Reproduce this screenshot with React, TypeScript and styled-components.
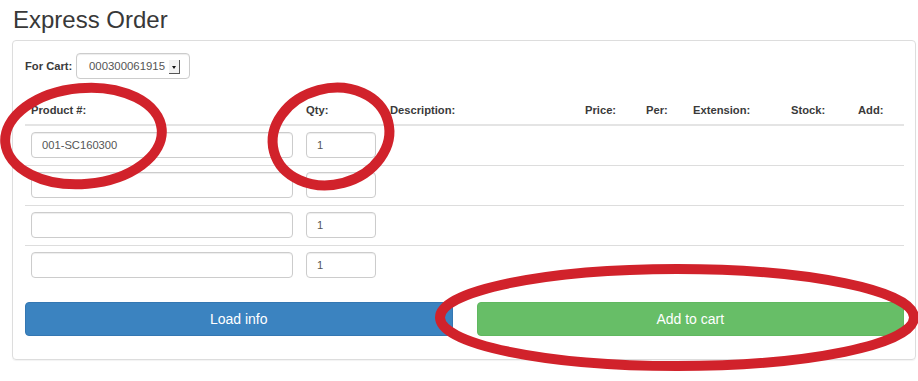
import styled, { createGlobalStyle } from 'styled-components';

const COLUMNS = '275px 84px 195px 61px 47px 98px 67px 52px';

const GlobalStyle = createGlobalStyle`
  html, body {
    margin: 0;
    padding: 0;
    background: #fff;
  }

  body {
    font-family: 'Liberation Sans', Arial, sans-serif;
    color: #333;
  }
`;

const Page = styled.div`
  position: relative;
  width: 918px;
  height: 381px;
  overflow: hidden;
`;

const Title = styled.h3`
  margin: 6px 0 0 13px;
  font-size: 24px;
  line-height: 27px;
  font-weight: 400;
  color: #383838;
`;

const Panel = styled.div`
  box-sizing: border-box;
  width: 904px;
  margin: 7px 0 0 12px;
  padding: 12px 11px 23px 12px;
  border: 1px solid #ddd;
  border-radius: 4px;
  box-shadow: 0 1px 1px rgba(0, 0, 0, 0.05);
`;

const CartRow = styled.div`
  display: flex;
  align-items: center;
  height: 26px;
`;

const CartLabel = styled.label`
  font-size: 11.2px;
  font-weight: 700;
  width: 51px;
  color: #3a3a3a;
`;

const CartSelect = styled.div`
  box-sizing: border-box;
  display: flex;
  align-items: center;
  justify-content: space-between;
  width: 114px;
  height: 26px;
  padding: 0 9px 0 12px;
  border: 1px solid #ccc;
  border-radius: 4px;
  box-shadow: inset 0 1px 1px rgba(0, 0, 0, 0.075);
  font-size: 11.4px;
  color: #555;
`;

const SelectArrow = styled.span`
  position: relative;
  box-sizing: border-box;
  width: 11px;
  height: 14px;
  margin-top: 1px;
  background: #f2f2f2;
  border-right: 1px solid #555;
  border-bottom: 1px solid #555;

  &::after {
    content: '';
    position: absolute;
    left: 3px;
    top: 6px;
    border-left: 2px solid transparent;
    border-right: 2px solid transparent;
    border-top: 3px solid #111;
  }
`;

const OrderTable = styled.div`
  margin-top: 17px;
`;

const HeaderRow = styled.div`
  display: grid;
  grid-template-columns: ${COLUMNS};
  padding: 6px 0;
  border-bottom: 2px solid #e4e4e4;
`;

const HeaderCell = styled.div`
  padding: 0 6px;
  font-size: 11.2px;
  line-height: 16px;
  font-weight: 700;
  color: #3a3a3a;
  white-space: nowrap;
`;

const BodyRow = styled.div<{ $last?: boolean }>`
  display: grid;
  grid-template-columns: ${COLUMNS};
  padding: 6px 0 7px;
  border-bottom: ${(p) => (p.$last ? 'none' : '1px solid #ddd')};
`;

const Cell = styled.div`
  padding: 0 6px;
`;

const TextInput = styled.input<{ $width: number }>`
  box-sizing: border-box;
  display: block;
  width: ${(p) => p.$width}px;
  height: 26px;
  padding: 0 10px;
  border: 1px solid #ccc;
  border-radius: 4px;
  box-shadow: inset 0 1px 1px rgba(0, 0, 0, 0.075);
  font-family: 'Liberation Sans', Arial, sans-serif;
  font-size: 11.2px;
  color: #555;
  background: #fff;
  outline: none;
`;

const Actions = styled.div`
  display: grid;
  grid-template-columns: 1fr 1fr;
  column-gap: 24px;
  margin-top: 17px;
`;

const ActionButton = styled.button<{ $variant: 'primary' | 'success' }>`
  height: 34px;
  border: 1px solid
    ${(p) => (p.$variant === 'primary' ? '#3477b2' : '#60b860')};
  border-radius: 4px;
  background: ${(p) => (p.$variant === 'primary' ? '#3b83c0' : '#67be67')};
  color: #fff;
  font-family: 'Liberation Sans', Arial, sans-serif;
  font-size: 14px;
  cursor: pointer;
`;

const Annotations = styled.svg`
  position: absolute;
  left: 0;
  top: 0;
  pointer-events: none;
`;

const AnnotationRing = styled.ellipse`
  fill: none;
  stroke: #d1222b;
  stroke-width: 10;
`;

const headers = [
  'Product #:',
  'Qty:',
  'Description:',
  'Price:',
  'Per:',
  'Extension:',
  'Stock:',
  'Add:',
];

const rows = [
  { product: '001-SC160300', qty: '1' },
  { product: '', qty: '1' },
  { product: '', qty: '1' },
  { product: '', qty: '1' },
];

export default function App() {
  return (
    <>
      <GlobalStyle />
      <Page>
        <Title>Express Order</Title>
        <Panel>
          <CartRow>
            <CartLabel>For Cart:</CartLabel>
            <CartSelect>
              <span>000300061915</span>
              <SelectArrow />
            </CartSelect>
          </CartRow>

          <OrderTable>
            <HeaderRow>
              {headers.map((h) => (
                <HeaderCell key={h}>{h}</HeaderCell>
              ))}
            </HeaderRow>
            {rows.map((row, i) => (
              <BodyRow key={i} $last={i === rows.length - 1}>
                <Cell>
                  <TextInput $width={262} defaultValue={row.product} />
                </Cell>
                <Cell>
                  <TextInput $width={70} defaultValue={row.qty} />
                </Cell>
              </BodyRow>
            ))}
          </OrderTable>

          <Actions>
            <ActionButton $variant="primary">Load info</ActionButton>
            <ActionButton $variant="success">Add to cart</ActionButton>
          </Actions>
        </Panel>

        {/* red marker circles drawn over the screenshot */}
        <Annotations width="918" height="381" viewBox="0 0 918 381">
          <AnnotationRing cx="83.5" cy="136" rx="78.5" ry="48" transform="rotate(-5 83.5 136)" />
          <AnnotationRing cx="331" cy="136.5" rx="59" ry="48" transform="rotate(-15 331 136.5)" />
          <AnnotationRing cx="677" cy="317.5" rx="237" ry="48.5" />
        </Annotations>
      </Page>
    </>
  );
}
